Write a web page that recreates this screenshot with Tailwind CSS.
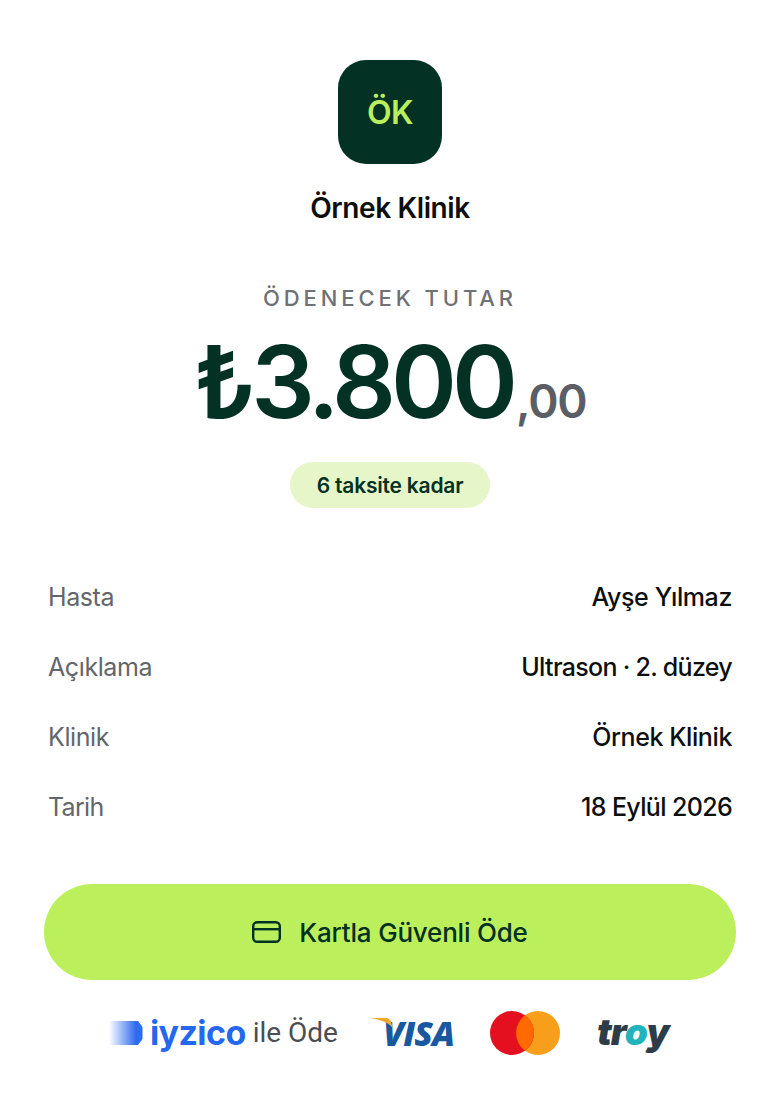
<!DOCTYPE html>
<html lang="tr">

<head>
  <title>Ödeme</title>
  <meta charset="utf-8">
  <meta name="viewport" content="width=device-width, initial-scale=1">
  <script src="https://cdn.jsdelivr.net/npm/@tailwindcss/browser@4"></script>
</head>

<body class="bg-white w-[780px] h-[1120px] overflow-hidden font-['Inter',sans-serif]">
  <div class="flex flex-col items-center pt-[60px] px-[44px]">
    <div class="w-[104px] h-[104px] rounded-[28px] bg-[#033123] flex items-center justify-center">
      <span class="text-[32px] leading-none font-semibold text-[#b9ef5c] tracking-[-0.5px] mt-[2px]">ÖK</span>
    </div>
    <h1 class="mt-[26px] text-[28px] leading-[36px] font-semibold text-[#0c0f0e] tracking-[-0.4px]">Örnek Klinik</h1>

    <p class="mt-[58px] text-[22px] leading-[28px] font-medium tracking-[3.9px] text-[#6f7175]">ÖDENECEK TUTAR</p>
    <div class="mt-[20px] flex items-baseline h-[100px]">
      <span class="text-[100px] leading-[100px] font-semibold text-[#033123] tracking-[-5px]">₺3.800</span>
      <span class="ml-[3px] text-[46px] leading-none font-semibold text-[#5c5e66] tracking-[-1.2px]">,00</span>
    </div>
    <div class="mt-[30px] h-[46px] w-[200px] rounded-full bg-[#e6f6c9] flex items-center justify-center">
      <span class="mt-[2px] text-[21px] font-semibold text-[#033123] tracking-[-0.2px]">6 taksite kadar</span>
    </div>

    <div class="mt-[55px] w-full px-[4px] flex flex-col text-[25px] tracking-[-0.4px]">
      <div class="h-[70px] flex items-center justify-between">
        <span class="text-[#63656b]">Hasta</span>
        <span class="font-medium text-[#0c0f0e]">Ayşe Yılmaz</span>
      </div>
      <div class="h-[70px] flex items-center justify-between">
        <span class="text-[#63656b]">Açıklama</span>
        <span class="font-medium text-[#0c0f0e] tracking-[-0.7px]">Ultrason · 2. düzey</span>
      </div>
      <div class="h-[70px] flex items-center justify-between">
        <span class="text-[#63656b]">Klinik</span>
        <span class="font-medium text-[#0c0f0e]">Örnek Klinik</span>
      </div>
      <div class="h-[70px] flex items-center justify-between">
        <span class="text-[#63656b] tracking-[-0.7px]">Tarih</span>
        <span class="font-medium text-[#0c0f0e] tracking-[-0.65px]">18 Eylül 2026</span>
      </div>
    </div>

    <button class="mt-[41px] w-full h-[96px] rounded-full bg-[#bbef5b] flex items-center justify-center gap-[18px]">
      <svg width="29" height="22" viewBox="0 0 29 22" fill="none" stroke="#033123" stroke-width="2.4">
        <rect x="1.2" y="1.2" width="26.6" height="19.6" rx="4"/>
        <path d="M1.2 8.2h26.6"/>
      </svg>
      <span class="text-[26px] font-medium text-[#033123] tracking-[-0.2px]">Kartla Güvenli Öde</span>
    </button>

    <div class="mt-[23px] w-full flex items-center h-[60px] pl-[65px]">
      <div class="flex items-center">
        <svg width="34" height="24" viewBox="0 0 34 24">
          <defs>
            <linearGradient id="iy" x1="0" x2="1" y1="0" y2="0">
              <stop offset="0" stop-color="#2f6bf0" stop-opacity="0"/>
              <stop offset="0.8" stop-color="#2f6bf0"/>
            </linearGradient>
          </defs>
          <path d="M0 0h29l4.500 6v12l-4.500 6H0z" fill="url(#iy)"/>
        </svg>
        <span class="ml-[7px] text-[34px] leading-none font-bold text-[#2468f0] tracking-[-0.6px]">iyzico</span>
        <span class="ml-[7px] text-[28px] leading-none font-['Roboto',sans-serif] text-[#4b4d52]">ile Öde</span>
      </div>
      <div class="ml-[32px] relative w-[84px] h-[32px]">
        <span class="block text-[34px] leading-[32px] font-black italic text-[#17589f] tracking-[-1px] font-['Open_Sans',sans-serif] text-right">VISA</span>
        <svg class="absolute left-0 top-0" width="26" height="14" viewBox="0 0 26 14">
          <path d="M0 1h17q4 .500 6 11Q19 4 0 1z" fill="#f0a82a"/>
        </svg>
      </div>
      <svg class="ml-[36px]" width="70" height="44" viewBox="0 0 70 44">
        <circle cx="48" cy="22" r="22" fill="#f79e1b"/>
        <circle cx="22" cy="22" r="22" fill="#e5101f"/>
        <path d="M35 4.300a22 22 0 0 1 0 35.400a22 22 0 0 1 0-35.400z" fill="#ff6a00"/>
      </svg>
      <div class="ml-[37px] mt-[-3px] text-[37px] leading-none font-black italic text-[#2e3c47] tracking-[-1px]">tr<span class="text-[#23b3bc]">o</span>y</div>
    </div>
  </div>
</body>

</html>
